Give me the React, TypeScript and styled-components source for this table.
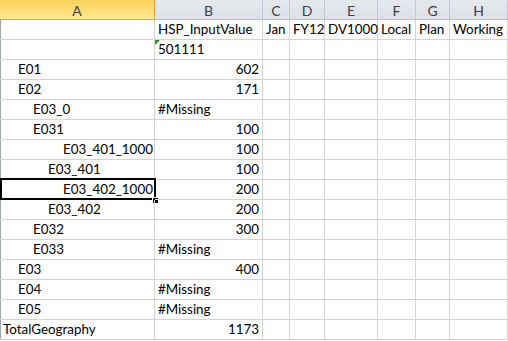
import React from 'react';
import styled, { createGlobalStyle } from 'styled-components';

const GlobalStyle = createGlobalStyle`
  html, body { margin: 0; padding: 0; background: #ffffff; }
  body { font-family: Lato, "Liberation Sans", sans-serif; }
`;

const widths = [155, 108, 27, 35, 53, 38, 34, 58];
const columns = widths.map((w) => `${w}px`).join(' ');
const letters = ['A', 'B', 'C', 'D', 'E', 'F', 'G', 'H'];

type Line = { label: string; level: number; value?: string; number?: boolean; selected?: boolean };

const lines: Line[] = [
  { label: 'E01', level: 1, value: '602', number: true },
  { label: 'E02', level: 1, value: '171', number: true },
  { label: 'E03_0', level: 2, value: '#Missing' },
  { label: 'E031', level: 2, value: '100', number: true },
  { label: 'E03_401_1000', level: 4, value: '100', number: true },
  { label: 'E03_401', level: 3, value: '100', number: true },
  { label: 'E03_402_1000', level: 4, value: '200', number: true, selected: true },
  { label: 'E03_402', level: 3, value: '200', number: true },
  { label: 'E032', level: 2, value: '300', number: true },
  { label: 'E033', level: 2, value: '#Missing' },
  { label: 'E03', level: 1, value: '400', number: true },
  { label: 'E04', level: 1, value: '#Missing' },
  { label: 'E05', level: 1, value: '#Missing' },
  { label: 'TotalGeography', level: 0, value: '1173', number: true },
];

const headerRow = ['', 'HSP_InputValue', 'Jan', 'FY12', 'DV1000', 'Local', 'Plan', 'Working'];

const Sheet = styled.div`
  width: 508px;
  height: 341px;
  overflow: hidden;
  background: #ffffff;
`;

const Row = styled.div`
  display: grid;
  grid-template-columns: ${columns};
  height: 20px;
`;

const ColHead = styled.div<{ $active?: boolean }>`
  box-sizing: border-box;
  display: flex;
  align-items: center;
  justify-content: center;
  padding-top: 1px;
  font-size: 14px;
  color: #3c4148;
  border-right: 1px solid ${(p) => (p.$active ? '#e2a544' : '#c4c9d0')};
  border-bottom: 1px solid ${(p) => (p.$active ? '#f29b36' : '#b7bdc5')};
  background: ${(p) =>
    p.$active ? 'linear-gradient(#f9d15c, #fee98f)' : 'linear-gradient(#e5e8ec, #dde1e6)'};
`;

const Cell = styled.div<{ $right?: boolean; $indent?: number; $edge?: boolean }>`
  position: relative;
  box-sizing: border-box;
  display: flex;
  align-items: flex-end;
  justify-content: ${(p) => (p.$right ? 'flex-end' : 'flex-start')};
  padding: 0 3px 2px ${(p) => 3 + (p.$indent ?? 0) * 15}px;
  font-size: 13.4px;
  line-height: 16px;
  color: #000000;
  white-space: nowrap;
  border-right: 1px solid #d4d4d4;
  border-bottom: 1px solid #d4d4d4;
  ${(p) => (p.$edge ? 'box-shadow: inset 1px 0 #9ea6b1;' : '')}
`;

const ErrorMark = styled.span`
  position: absolute;
  top: 0;
  left: 0;
  width: 0;
  height: 0;
  border-top: 5px solid #2f8f2f;
  border-right: 5px solid transparent;
`;

const Selection = styled.div`
  position: absolute;
  top: -2px;
  left: 0;
  width: 156px;
  height: 22px;
  box-sizing: border-box;
  border: 2px solid #000000;
  pointer-events: none;
`;

const FillHandle = styled.span`
  position: absolute;
  right: -4px;
  bottom: -5px;
  width: 5px;
  height: 5px;
  background: #000000;
  box-shadow: 0 0 0 1px #ffffff;
`;

function BlankCells({ from }: { from: number }) {
  return (
    <>
      {widths.slice(from).map((_, i) => (
        <Cell key={i} />
      ))}
    </>
  );
}

export default function App() {
  return (
    <Sheet>
      <GlobalStyle />
      <Row>
        {letters.map((l, i) => (
          <ColHead key={l} $active={i === 0}>
            {l}
          </ColHead>
        ))}
      </Row>
      <Row>
        {headerRow.map((t, i) => (
          <Cell key={i} $edge={i === 0}>
            {t}
          </Cell>
        ))}
      </Row>
      <Row>
        <Cell $edge />
        <Cell>
          <ErrorMark />
          501111
        </Cell>
        <BlankCells from={2} />
      </Row>
      {lines.map((line) => (
        <Row key={line.label}>
          <Cell $edge $indent={line.level}>
            {line.label}
            {line.selected && (
              <Selection>
                <FillHandle />
              </Selection>
            )}
          </Cell>
          <Cell $right={line.number}>{line.value}</Cell>
          <BlankCells from={2} />
        </Row>
      ))}
    </Sheet>
  );
}
